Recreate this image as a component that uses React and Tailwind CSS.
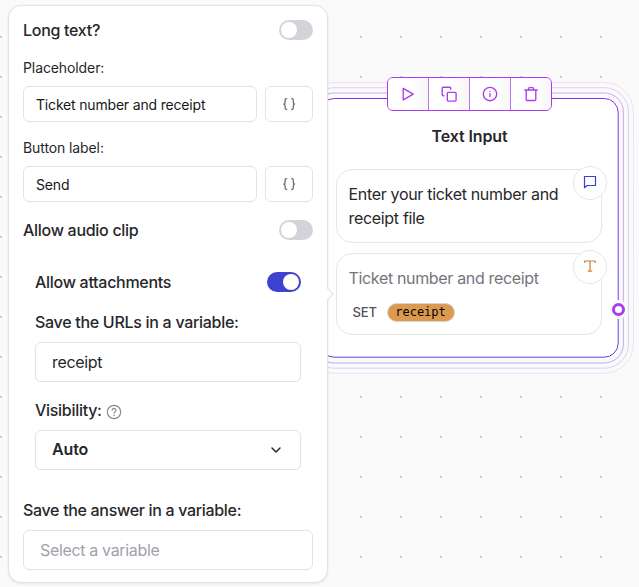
import React from "react";

const FONT = "font-['Inter','Liberation_Sans',sans-serif]";

function Toggle({ on }) {
  return (
    <div
      role="switch"
      aria-checked={!!on}
      className={
        "flex h-5 w-[34px] shrink-0 items-center rounded-full px-0.5 " +
        (on ? "justify-end bg-[#3f42d1]" : "justify-start bg-[#d3d3d9]")
      }
    >
      <div className="size-4 rounded-full bg-white" />
    </div>
  );
}

function ToggleRow({ label, on }) {
  return (
    <div className="flex h-5 items-center justify-between">
      <span className="text-base font-medium leading-5 tracking-[-0.29px]">{label}</span>
      <Toggle on={on} />
    </div>
  );
}

function TextField({ label, value }) {
  return (
    <div className="flex flex-col gap-2">
      <span className="self-start text-sm leading-5 tracking-[-0.1px]">{label}</span>
      <div className="flex gap-2">
        <div className="flex h-9 flex-1 items-center rounded-[6px] border border-[#e3e3e6] px-3 pt-px text-sm tracking-[-0.18px] text-[#18181b]">
          <span>{value}</span>
        </div>
        <div className="flex h-9 w-12 items-center justify-center rounded-[6px] border border-[#e3e3e6] text-[#6b6b70]">
          <svg width="14" height="14" viewBox="0 0 14 14" fill="none" stroke="currentColor" strokeWidth="1.300" strokeLinecap="round" strokeLinejoin="round">
            <path d="M4.700 1.700C3.500 1.700 3.100 2.200 3.100 3.200v2C3.100 6.300 2.700 6.900 1.900 7.100c.8.200 1.200.8 1.200 1.900v2c0 1 .4 1.500 1.600 1.500" />
            <path d="M9.700 1.700c1.200 0 1.600.5 1.600 1.500v2c0 1.100.4 1.700 1.200 1.900c-.8.200-1.200.8-1.200 1.900v2c0 1-.4 1.500-1.600 1.500" />
          </svg>
        </div>
      </div>
    </div>
  );
}

function SettingsPanel() {
  return (
    <div className="absolute left-2 top-[5px] flex h-[578px] w-80 flex-col rounded-[13px] border border-[#e2e2e4] bg-white px-[14px] pt-[14px] text-[#27272a] shadow-[0_1px_3px_rgba(0,0,0,0.08)]">
      <ToggleRow label="Long text?" />
      <div className="mt-[18px] flex flex-col gap-4">
        <TextField label="Placeholder:" value="Ticket number and receipt" />
        <TextField label="Button label:" value="Send" />
      </div>
      <div className="mt-[18px]">
        <ToggleRow label="Allow audio clip" />
      </div>
      <div className="mt-8 flex flex-col px-3">
        <ToggleRow label="Allow attachments" on />
        <span className="mt-5 self-start text-base font-medium leading-5 tracking-[-0.29px]">Save the URLs in a variable:</span>
        <div className="mt-2.5 flex h-10 items-center rounded-[6px] border border-[#e3e3e6] px-4 text-base tracking-[-0.33px]">
          <span>receipt</span>
        </div>
        <div className="mt-[18px] flex h-5 items-center gap-1">
          <span className="text-base font-medium leading-5 tracking-[-0.29px]">Visibility:</span>
          <svg className="mt-[3px]" width="16" height="16" viewBox="0 0 16 16" fill="none" stroke="#8b8b90" strokeWidth="1.200" strokeLinecap="round">
            <circle cx="8" cy="8" r="6.700" />
            <path d="M6.100 6.300a1.900 1.900 0 1 1 2.700 1.700c-.6.3-.8.6-.8 1.100" />
            <path d="M8 11.300v.1" strokeWidth="1.500" />
          </svg>
        </div>
        <div className="mt-2.5 flex h-10 items-center justify-between rounded-[6px] border border-[#e3e3e6] px-4 text-base">
          <span className="pb-0.5 font-semibold tracking-[-0.15px]">Auto</span>
          <svg width="16" height="16" viewBox="0 0 16 16" fill="none" stroke="#27272a" strokeWidth="1.500" strokeLinecap="round" strokeLinejoin="round">
            <path d="M4 6l4 4 4-4" />
          </svg>
        </div>
      </div>
      <span className="mt-[30px] self-start text-base font-medium leading-5 tracking-[-0.32px]">Save the answer in a variable:</span>
      <div className="mt-2.5 flex h-10 items-center rounded-[6px] border border-[#e3e3e6] px-4 text-base tracking-[-0.34px] text-[#a1a1ab]">
        <span>Select a variable</span>
      </div>
    </div>
  );
}

const tools = [
  <path key="p" d="M3.200 2.300v11.600l10-5.800z" />,
  <g key="c">
    <rect x="6.300" y="6.300" width="8.800" height="8.800" rx="1" />
    <path d="M2.800 9.700h-.6a1 1 0 0 1-1-1V2.200a1 1 0 0 1 1-1h6.500a1 1 0 0 1 1 1v1" />
  </g>,
  <g key="i">
    <circle cx="8" cy="8" r="6.700" />
    <path d="M8 10.600V7.700M8 5.300v.1" />
  </g>,
  <path key="t" d="M1.800 4h12.400M3.200 4v9.500a1 1 0 0 0 1 1h7.600a1 1 0 0 0 1-1V4M5.500 4V2.600a1 1 0 0 1 1-1h3a1 1 0 0 1 1 1V4" />,
];

function Toolbar() {
  return (
    <div className="absolute left-[387px] top-[77px] flex h-[34px] w-[165px] divide-x divide-[#bd75f5] overflow-hidden rounded-[6px] border border-[#a93cf0] bg-white text-[#a93cf0]">
      {tools.map((icon, i) => (
        <div key={i} className="flex flex-1 items-center justify-center bg-linear-to-r from-white from-60% to-[#f6f6f7]">
          <svg width="16" height="16" viewBox="0 0 16 16" fill="none" stroke="currentColor" strokeWidth="1.350" strokeLinecap="round" strokeLinejoin="round">
            {icon}
          </svg>
        </div>
      ))}
    </div>
  );
}

function Badge({ children }) {
  return (
    <div className="absolute -right-[6px] -top-[4px] flex size-[34px] items-center justify-center rounded-full border border-[#e6e6e8] bg-white">
      {children}
    </div>
  );
}

function SelectionRings() {
  return (
    <svg className="absolute left-[300px] top-[70px]" width="339" height="320" viewBox="300 70 339 320" fill="none">
      <defs>
        <linearGradient id="ring" x1="0" y1="82" x2="0" y2="374" gradientUnits="userSpaceOnUse">
          <stop offset="0" stopColor="#8b2ae8" />
          <stop offset="1" stopColor="#5a42e0" />
        </linearGradient>
      </defs>
      <g stroke="url(#ring)">
        <rect x="320.200" y="98.500" width="298" height="258.700" rx="14" />
        <rect x="315" y="93" width="308.400" height="270" rx="19" opacity="0.4" />
        <rect x="310" y="87.700" width="318.400" height="280.500" rx="24" opacity="0.22" />
        <rect x="305" y="82.500" width="328.400" height="290.700" rx="29" opacity="0.12" />
      </g>
    </svg>
  );
}

function InputNode() {
  return (
    <>
      <div className="absolute left-[320px] top-[98px] flex h-[260px] w-[299px] flex-col items-center rounded-[14px] bg-white pt-7 text-[#27272a]">
        <span className="text-base font-semibold leading-5 tracking-[-0.1px]">Text Input</span>
        <div className="relative mt-[23px] ml-4 h-[74px] w-[266px] self-start rounded-2xl border border-[#e6e6e8] px-[11.500px] pt-3 text-base leading-6 tracking-[-0.32px]">
          <p>Enter your ticket number and</p>
          <p>receipt file</p>
          <Badge>
            <svg className="-mt-0.5" width="14" height="14" viewBox="0 0 14 14" fill="none" stroke="#3b3fd8" strokeWidth="1.200" strokeLinejoin="round">
              <path d="M1.500 1.500h11v9H4l-2.500 2.200z" />
            </svg>
          </Badge>
        </div>
        <div className="relative mt-2.5 ml-4 h-[82px] w-[266px] self-start rounded-2xl border border-[#e6e6e8] px-[11.500px] pt-3 text-base leading-6 tracking-[-0.34px]">
          <p className="text-[#75757c]">Ticket number and receipt</p>
          <div className="mt-3 flex h-5 items-center pl-1">
            <span className="w-[34px] text-[13px] font-medium tracking-[-0.1px] text-[#52525b]">SET</span>
            <span className="flex h-[19px] w-[68px] items-center justify-center rounded-full border border-[#d8d5d2] bg-[#db9a50] font-['DejaVu_Sans_Mono',monospace] text-xs tracking-normal text-black">
              receipt
            </span>
          </div>
          <Badge>
            <svg className="-mt-0.5" width="14" height="14" viewBox="0 0 14 14" fill="none" stroke="#c9812f" strokeWidth="1.200">
              <path d="M1.800 4V2h10.400v2M7 2v10.200M4.800 12.200h4.400" />
            </svg>
          </Badge>
        </div>
      </div>
      <SelectionRings />
      <div className="absolute left-[609px] top-[300px] flex size-[19px] items-center justify-center rounded-full bg-[#fafafa]">
        <div className="size-[13px] rounded-full border-[3px] border-[#a93cf0] bg-white" />
      </div>
    </>
  );
}

export default function App() {
  return (
    <div className={"relative h-[587px] w-[639px] overflow-hidden bg-[#fafafa] antialiased " + FONT}>
      <svg className="absolute inset-0" width="639" height="587">
        <defs>
          <pattern id="dots" width="40" height="40" patternUnits="userSpaceOnUse" y="36">
            <rect width="2" height="2" fill="#cacaca" />
          </pattern>
        </defs>
        <rect width="639" height="587" fill="url(#dots)" />
      </svg>
      <InputNode />
      <Toolbar />
      <SettingsPanel />
      <div className="absolute left-[323.500px] top-[290px] size-2 rotate-45 border-r border-t border-[#e2e2e4] bg-white" />
    </div>
  );
}
